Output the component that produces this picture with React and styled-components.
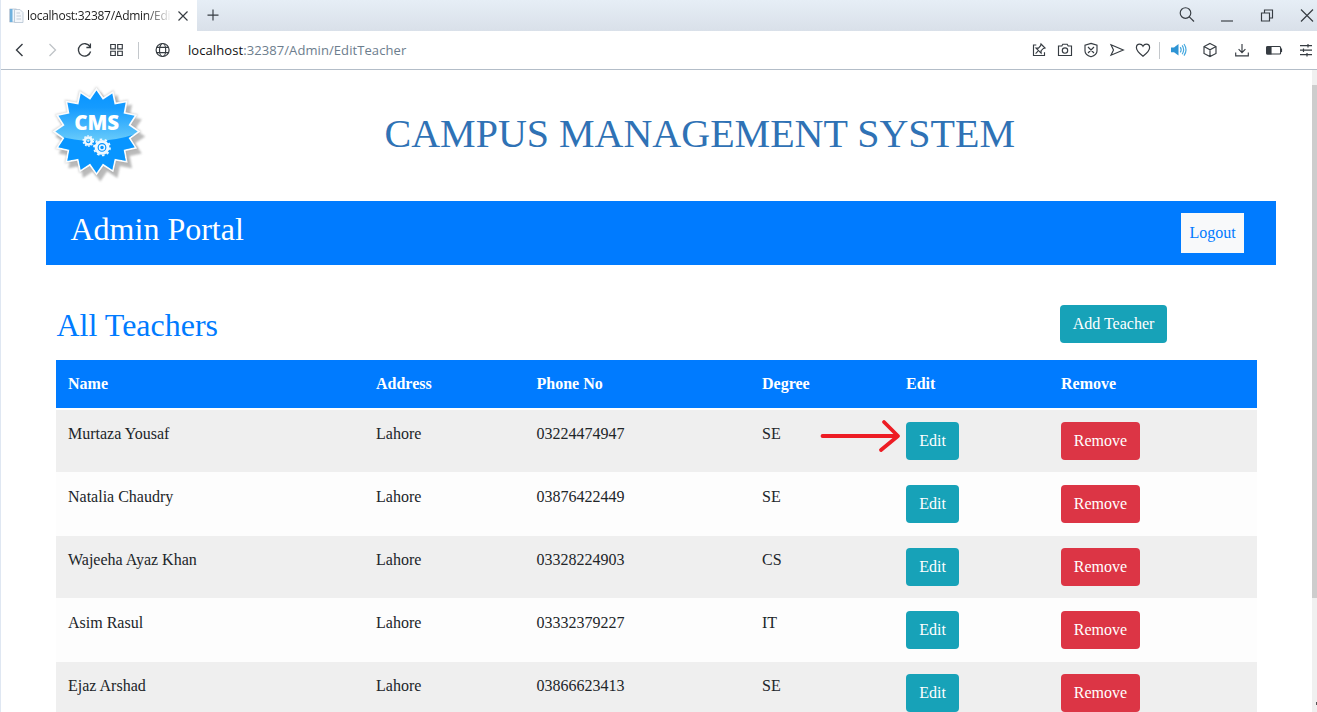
import React from "react";
import styled, { createGlobalStyle } from "styled-components";

const Global = createGlobalStyle`
  * { box-sizing: border-box; }
  html, body { margin: 0; padding: 0; overflow: hidden; background: #fff; }
`;

const Window = styled.div`
  width: 1317px;
  height: 712px;
  overflow: hidden;
  display: flex;
  flex-direction: column;
  background: #fff;
  border-left: 1px solid #dfe7f2;
  font-family: "Liberation Serif", "Times New Roman", serif;
  font-size: 16px;
  color: #212529;
`;

const TitleBar = styled.div`
  height: 31px;
  flex: none;
  display: flex;
  background: linear-gradient(#e6eef6, #d9e0e9);
`;

const Tab = styled.div`
  width: 196px;
  height: 31px;
  background: #fff;
  display: flex;
  align-items: center;
  padding-left: 7px;
`;

const TabTitle = styled.span`
  width: 143px;
  margin-left: 3px;
  overflow: hidden;
  white-space: nowrap;
  font: 12px/20px "Open Sans", "Noto Sans", sans-serif;
  letter-spacing: -0.27px;
  color: #222;
  mask-image: linear-gradient(90deg, #000 118px, transparent 145px);
`;

const Slot = styled.div`
  width: ${(p) => p.$w}px;
  flex: none;
  display: flex;
  align-items: center;
  justify-content: center;
`;

const Spacer = styled.div`
  flex: 1;
`;

const Controls = styled.div`
  display: flex;
  margin-right: -10px;
`;

const Glyph = styled.svg`
  display: block;
  flex: none;
  overflow: visible;
  fill: none;
  stroke: ${(p) => p.$color || "#363c42"};
  stroke-width: ${(p) => p.$weight || 1.15};
`;

const AddressBar = styled.div`
  height: 39px;
  flex: none;
  display: flex;
  align-items: center;
  padding-left: 3px;
  border-bottom: 1px solid #b3bdc8;
`;

const Divider = styled.div`
  width: 1px;
  height: 17px;
  background: #c4c8cc;
`;

const Url = styled.div`
  margin-left: 9px;
  white-space: nowrap;
  font: 13px/20px "Open Sans", "Noto Sans", sans-serif;
  letter-spacing: 0.08px;
  color: #6c7d8d;
  b { font-weight: 400; color: #111; }
`;

const Tools = styled.div`
  display: flex;
  align-items: center;
  margin-right: -5px;
`;

const Viewport = styled.div`
  flex: 1;
  min-height: 0;
  display: flex;
`;

const Page = styled.main`
  flex: 1;
  min-width: 0;
  overflow: hidden;
  padding-left: 45px;
`;

const Header = styled.header`
  height: 131px;
  display: flex;
`;

const Logo = styled.svg`
  width: 110px;
  height: 110px;
  margin: 12px 0 0 0;
  flex: none;
`;

const SystemTitle = styled.h1`
  margin: 40px 0 0 228.5px;
  font-weight: 400;
  font-size: 40px;
  line-height: 48px;
  white-space: nowrap;
  color: #2f72b5;
`;

const PortalBar = styled.nav`
  width: 1230px;
  height: 64px;
  padding: 8px 32px 0 24.5px;
  background: #007bff;
  display: flex;
  justify-content: space-between;
`;

const PortalName = styled.h2`
  margin: 0;
  font-weight: 400;
  font-size: 32px;
  line-height: 40px;
  color: #fff;
`;

const Logout = styled.button`
  margin: 4px 0 0;
  width: 63px;
  height: 40px;
  padding: 0;
  border: 0;
  background: #f8f9fa;
  color: #007bff;
  font: inherit;
`;

const Section = styled.section`
  width: 1201px;
  margin: 40px 0 0 10px;
`;

const SectionHead = styled.div`
  height: 55px;
  padding-right: 90px;
  display: flex;
  justify-content: space-between;
`;

const SectionTitle = styled.h2`
  margin: 0 0 0 0.5px;
  font-weight: 400;
  font-size: 32px;
  line-height: 40px;
  color: #007bff;
`;

const tones = { teal: "#17a2b8", red: "#dc3545" };

const Button = styled.button`
  height: 38px;
  width: ${(p) => p.$w}px;
  padding: 0;
  border: 0;
  border-radius: 4px;
  background: ${(p) => tones[p.$tone]};
  color: #fff;
  font: inherit;
`;

const columns = "308px 160.5px 225.5px 144px 155px 208px";

const HeadRow = styled.div`
  display: grid;
  grid-template-columns: ${columns};
  height: 48px;
  margin-bottom: 2px;
  align-items: center;
  background: #007bff;
  color: #fff;
  font-weight: 700;
`;

const Row = styled.div`
  display: grid;
  grid-template-columns: ${columns};
  height: ${(p) => (p.$shaded ? 62 : 64)}px;
  padding-top: ${(p) => (p.$shaded ? 12 : 13)}px;
  background: ${(p) => (p.$shaded ? "#efefef" : "#fdfdfd")};
`;

const Cell = styled.div`
  position: relative;
  padding-left: 12px;
  line-height: 24px;
`;

const Pointer = styled.svg`
  position: absolute;
  left: 69px;
  top: -4px;
  overflow: visible;
  fill: none;
  stroke: #ed1c24;
  stroke-width: 3.8;
  stroke-linecap: round;
  stroke-linejoin: round;
`;

const ScrollTrack = styled.div`
  width: 5px;
  background: #f0f0f0;
  padding-top: 15px;
  display: flex;
  flex-direction: column;
  justify-content: space-between;
`;

const ScrollThumb = styled.div`
  height: 513px;
  background: #cdcdcd;
`;

const ScrollArrow = styled.div`
  width: 1px;
  height: 3px;
  margin: 0 0 7px 4px;
  background: #555;
`;

function burst(cx, cy, outer, inner, n) {
  return Array.from({ length: n * 2 }, (_, i) => {
    const r = i % 2 ? inner : outer;
    const a = (i * Math.PI) / n;
    return `${(cx + r * Math.sin(a)).toFixed(2)},${(cy - r * Math.cos(a)).toFixed(2)}`;
  }).join(" ");
}

function CmsLogo() {
  return (
    <Logo viewBox="46 82 110 110">
      <defs>
        <linearGradient id="sky" x1="0" y1="0" x2="0" y2="1">
          <stop offset="0" stopColor="#0793ff" />
          <stop offset="0.22" stopColor="#149bff" />
          <stop offset="0.62" stopColor="#6ccdfa" />
        </linearGradient>
        <clipPath id="badge"><polygon points={burst(96.5, 131.6, 41.2, 32.6, 16)} /></clipPath>
        <filter id="soft" x="-20%" y="-20%" width="140%" height="140%"><feGaussianBlur stdDeviation="1.1" /></filter>
      </defs>
      <polygon points={burst(100.2, 136.4, 45, 35.5, 16)} fill="#777" opacity="0.5" filter="url(#soft)" />
      <polygon points={burst(96.5, 131.6, 45, 35.5, 16)} fill="#999" opacity="0.45" filter="url(#soft)" />
      <polygon points={burst(96.5, 131.6, 44, 35, 16)} fill="#fafcfe" />
      <g clipPath="url(#badge)">
        <rect x="50" y="88" width="94" height="88" fill="url(#sky)" />
        <path d="M50 133Q96 150 144 131V180H50Z" fill="#0795ff" />
      </g>
      <text x="74.2" y="130.1" textLength="45" lengthAdjust="spacingAndGlyphs" fontFamily="Open Sans, sans-serif" fontWeight="800" fontSize="20.5" fill="#fff">CMS</text>
      <g fill="none" stroke="#eff9ff">
        <circle cx="88.3" cy="141" r="3.5" strokeWidth="2.6" />
        <circle cx="88.3" cy="141" r="5.2" strokeWidth="1.3" strokeDasharray="1.63 1.63" />
        <circle cx="88.3" cy="141" r="0.7" strokeWidth="1" />
        <circle cx="102" cy="147.4" r="5.9" strokeWidth="3" />
        <circle cx="102" cy="147.4" r="8" strokeWidth="1.8" strokeDasharray="2.51 2.51" />
        <circle cx="102" cy="147.4" r="2.5" strokeWidth="1.5" />
      </g>
    </Logo>
  );
}

const G = ({ children, ...p }) => (
  <Glyph width="16" height="16" viewBox="0 0 16 16" {...p}>{children}</Glyph>
);

const teachers = [
  ["Murtaza Yousaf", "Lahore", "03224474947", "SE"],
  ["Natalia Chaudry", "Lahore", "03876422449", "SE"],
  ["Wajeeha Ayaz Khan", "Lahore", "03328224903", "CS"],
  ["Asim Rasul", "Lahore", "03332379227", "IT"],
  ["Ejaz Arshad", "Lahore", "03866623413", "SE"],
];

function BrowserTop() {
  return (
    <>
      <TitleBar>
        <Tab>
          <G $weight={0.8} $color="#b4c3d2">
            <path d="M1.5 1H8.5V14H1.5Z" fill="#eef5fb" />
            <path d="M2 1H4.5V14H2Z" fill="#6fb1de" stroke="none" />
            <path d="M6.5 1.5H12L15 4.5V14.5H6.5Z" fill="#f4f7fb" />
            <path d="M8.5 5H12M8.5 8H13M8.5 11H13" />
          </G>
          <TabTitle>localhost:32387/Admin/Edi</TabTitle>
          <Slot $w={26}><G><path d="M3.5 3.5L12.5 12.5M12.5 3.5L3.5 12.5" /></G></Slot>
        </Tab>
        <Slot $w={31}><G><path d="M8 2.5V13.5M2.5 8H13.5" transform="translate(0 -.9)" /></G></Slot>
        <Spacer />
        <Controls>
          <Slot $w={40}><G><circle cx="6.5" cy="5" r="5.3" /><path d="M10.3 8.8L15 13.5" /></G></Slot>
          <Slot $w={40}><G><path d="M2 13H14" /></G></Slot>
          <Slot $w={40}><G><path d="M2.5 5.5H10.5V13.5H2.5ZM5.5 5.5V2.5H13.5V10.5H10.5" transform="translate(0 -.5)" /></G></Slot>
          <Slot $w={40}><G><path d="M2 2L14 14M14 2L2 14" transform="translate(0 -.5)" /></G></Slot>
        </Controls>
      </TitleBar>
      <AddressBar>
        <Slot $w={32}><G $weight={1.4}><path d="M10.5 2L4.5 8L10.5 14" /></G></Slot>
        <Slot $w={32}><G $color="#bfc3c7" $weight={1.3}><path d="M5.5 2L11.5 8L5.5 14" /></G></Slot>
        <Slot $w={32}><G $weight={1.3}><path d="M13.4 4.8A6.2 6.2 0 1 0 14 9.5M13.8 1.5V5.5H9.8" transform="translate(.6 0)" /></G></Slot>
        <Slot $w={33}><G><path d="M2.2 2.5H6.8V6.8H2.2ZM9.2 2.5H13.8V6.8H9.2ZM2.2 9.2H6.8V13.5H2.2ZM9.2 9.2H13.8V13.5H9.2Z" transform="translate(-.5 0)" /></G></Slot>
        <Slot $w={11}><Divider /></Slot>
        <Slot $w={35}>
          <G $weight={1.2}>
            <g transform="translate(.6 0)">
              <circle cx="8" cy="8" r="6.5" /><ellipse cx="8" cy="8" rx="3.1" ry="6.5" />
              <path d="M2.3 5.4H13.7M2.3 10.6H13.7" />
            </g>
          </G>
        </Slot>
        <Url><b>localhost</b>:32387/Admin/EditTeacher</Url>
        <Spacer />
        <Tools>
          <Slot $w={26}><G><path d="M5.3 3H2.5V13.5H13.5V10.3M4.6 11.6L7 9.2M10 2L14 6L12.4 6.4L10.1 8.7V11.2L5 6.1H7.5L9.6 3.7Z" /></G></Slot>
          <Slot $w={26}><G><path d="M1.5 4H4.8L5.8 2.2H10.2L11.2 4H14.5V13.5H1.5Z" /><circle cx="8" cy="8.5" r="2.7" /></G></Slot>
          <Slot $w={26}><G><path d="M8 1.4L14 3.2V9C14 11.6 11.4 13.7 8 14.8C4.6 13.7 2 11.6 2 9V3.2ZM5 5L11 11M11 5L5 11" /></G></Slot>
          <Slot $w={26}><G><path d="M2 2.8L14.3 8L2 13.2L4.5 8Z" /></G></Slot>
          <Slot $w={26}><G $weight={1.2}><path d="M8 14.2C4.5 11.4 1.4 9 1.4 5.7C1.4 3.6 2.9 2.2 4.7 2.2C6.2 2.2 7.3 3 8 4.3C8.7 3 9.8 2.2 11.3 2.2C13.1 2.2 14.6 3.6 14.6 5.7C14.6 9 11.5 11.4 8 14.2Z" /></G></Slot>
          <Slot $w={7}><Divider /></Slot>
          <Slot $w={32}>
            <G $color="#45a8df" $weight={1.5}>
              <path d="M0 5.5H3L7.5 2V13.5L3 10.3H0Z" fill="#2e94d4" stroke="none" />
              <path d="M9.3 5.2Q11 7.8 9.3 10.4M11.2 3.4Q14 7.8 11.2 12.2M13 2Q17 7.8 13 13.6" strokeWidth="1.2" />
            </G>
          </Slot>
          <Slot $w={30}><G><path d="M8 1.5L14 4.6V11.4L8 14.5L2 11.4V4.6ZM2 4.6L8 7.8L14 4.6M8 7.8V14.5" /></G></Slot>
          <Slot $w={33}><G><path d="M8 2V10.5M4.6 7.2L8 10.6L11.4 7.2M1.7 10.5V13.8H14.3V10.5" /></G></Slot>
          <Slot $w={32}><G><rect x="0.6" y="4.5" width="14" height="7.5" rx="1" /><path d="M1 5H5V12H1Z" fill="#363c42" /><path d="M15.5 6.5V10" /></G></Slot>
          <Slot $w={32}><G $weight={1.2}><path d="M2 3.7H14M2 8.2H14M2 12.7H14M10 1.9V5.5M5.5 6.4V10M9 10.9V14.5" /></G></Slot>
        </Tools>
      </AddressBar>
    </>
  );
}

export default function App() {
  return (
    <Window>
      <Global />
      <BrowserTop />
      <Viewport>
        <Page>
          <Header>
            <CmsLogo />
            <SystemTitle>CAMPUS MANAGEMENT SYSTEM</SystemTitle>
          </Header>
          <PortalBar>
            <PortalName>Admin Portal</PortalName>
            <Logout>Logout</Logout>
          </PortalBar>
          <Section>
            <SectionHead>
              <SectionTitle>All Teachers</SectionTitle>
              <Button $tone="teal" $w={107}>Add Teacher</Button>
            </SectionHead>
            <HeadRow>
              {["Name", "Address", "Phone No", "Degree", "Edit", "Remove"].map((h) => <Cell key={h}>{h}</Cell>)}
            </HeadRow>
            {teachers.map((t, i) => (
              <Row key={t[0]} $shaded={i % 2 === 0}>
                {t.map((value, c) => (
                  <Cell key={c}>
                    {value}
                    {i === 0 && c === 3 && (
                      <Pointer width="84" height="36">
                        <path d="M3.5 18H78M65 4L79 18L62 32" />
                      </Pointer>
                    )}
                  </Cell>
                ))}
                <Cell><Button $tone="teal" $w={53}>Edit</Button></Cell>
                <Cell><Button $tone="red" $w={79}>Remove</Button></Cell>
              </Row>
            ))}
          </Section>
        </Page>
        <ScrollTrack>
          <ScrollThumb />
          <ScrollArrow />
        </ScrollTrack>
      </Viewport>
    </Window>
  );
}
